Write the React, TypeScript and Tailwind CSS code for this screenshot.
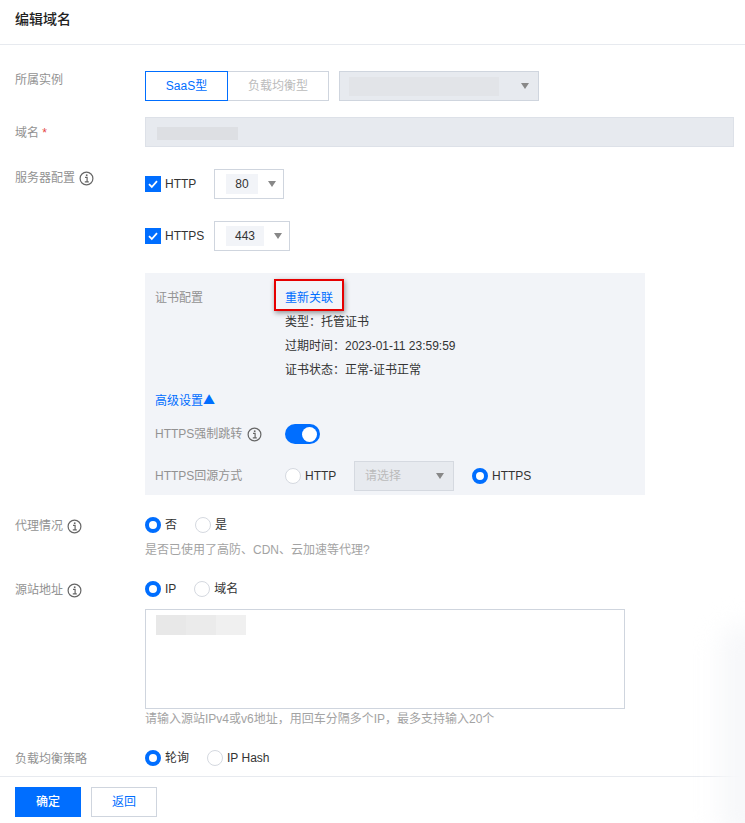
import React from 'react';

const FONT = "font-['Liberation_Sans','Noto_Sans_CJK_SC',sans-serif]";

const Caret = ({ className = '' }: { className?: string }) => (
  <span className={`block h-0 w-0 border-x-[4.5px] border-t-[6px] border-x-transparent border-t-[#888] ${className}`} />
);

const InfoIcon = () => (
  <svg width="15" height="15" viewBox="0 0 15 15" fill="none" className="shrink-0">
    <circle cx="7.5" cy="7.5" r="6.4" stroke="#666" strokeWidth="1.2" />
    <rect x="6.9" y="3.4" width="1.6" height="1.6" fill="#666" />
    <path d="M6 6.3h2.1v4.5M5.8 10.9h4" stroke="#666" strokeWidth="1.2" />
  </svg>
);

const Radio = ({ checked, label }: { checked?: boolean; label: string }) => (
  <span className="flex items-center">
    {checked ? (
      <span className="block h-4 w-4 rounded-full border-[4px] border-[#006eff] bg-white" />
    ) : (
      <span className="block h-4 w-4 rounded-full border border-[#d5d9e0] bg-white" />
    )}
    <span className="ml-[4px] text-xs text-[#333]">{label}</span>
  </span>
);

const Check = ({ label }: { label: string }) => (
  <span className="flex items-center">
    <span className="flex h-4 w-4 items-center justify-center bg-[#006eff]">
      <svg width="12" height="12" viewBox="0 0 12 12" fill="none">
        <path d="M2 6.2l2.8 2.8L10 3.2" stroke="#fff" strokeWidth="1.8" />
      </svg>
    </span>
    <span className="ml-[4px] text-xs text-[#333]">{label}</span>
  </span>
);

const PortSelect = ({ value, width, pill }: { value: string; width: string; pill: string }) => (
  <div className={`flex h-[30px] items-center justify-between border border-[#cfd5de] bg-white pl-[11px] pr-[7px] ${width}`}>
    <span className={`flex h-[20px] items-center justify-center bg-[#f2f4f8] text-xs text-[#333] ${pill}`}>{value}</span>
    <Caret />
  </div>
);

const Row = ({ label, children, className = '' }: { label: React.ReactNode; children: React.ReactNode; className?: string }) => (
  <div className={`flex ${className}`}>
    <div className="w-[130px] shrink-0 text-xs text-[#929292]">{label}</div>
    <div className="min-w-0 flex-1">{children}</div>
  </div>
);

const LabelWithInfo = ({ text }: { text: string }) => (
  <span className="flex items-center gap-[4px] leading-[18px]">
    {text}
    <InfoIcon />
  </span>
);

const App: React.FC = () => {
  return (
    <div className={`relative flex h-[823px] w-[745px] flex-col overflow-hidden bg-white ${FONT}`}>
      {/* faint glow at the right edge */}
      <div className="pointer-events-none absolute bottom-[-20px] right-[-24px] h-[220px] w-[50px] rounded-full bg-[#f7f8fa] blur-md" />

      <div className="flex h-[45px] shrink-0 items-start border-b border-[#e7eaef] pl-[15px] pt-[10px]">
        <h1 className="text-[14px] font-medium leading-[18px] text-[#222]">编辑域名</h1>
      </div>

      <div className="relative flex-1 overflow-hidden pl-[15px] pr-[11px] pt-[26px]">
        <Row label={<span className="block leading-[18px]">所属实例</span>}>
          <div className="flex">
            <div className="flex h-[30px] w-[83px] items-center justify-center border border-[#006eff] text-xs text-[#006eff]">SaaS型</div>
            <div className="flex h-[30px] w-[101px] items-center justify-center border border-l-0 border-[#cfd5de] text-xs text-[#bbb]">负载均衡型</div>
            <div className="ml-[10px] flex h-[30px] w-[200px] items-center justify-between border border-[#cfd5de] bg-[#e7eaef] pl-[9px] pr-[9px]">
              <span className="block h-[19px] w-[150px] bg-[#e2e4e8]" />
              <Caret />
            </div>
          </div>
        </Row>

        <Row label={<span className="block pt-[7px] leading-[18px]">域名 <span className="text-[#e54545]">*</span></span>} className="mt-[16px]">
          <div className="flex h-[30px] items-center border border-[#dde1e8] bg-[#e7eaef] pl-[11px]">
            <span className="mt-[3px] block h-[13px] w-[81px] bg-[#dddfe3]" />
          </div>
        </Row>

        <Row label={<LabelWithInfo text="服务器配置" />} className="mt-[22px]">
          <div className="flex items-center">
            <div className="w-[69px]"><Check label="HTTP" /></div>
            <PortSelect value="80" width="w-[70px]" pill="w-[32px]" />
          </div>
          <div className="mt-[22px] flex items-center">
            <div className="w-[69px]"><Check label="HTTPS" /></div>
            <PortSelect value="443" width="w-[76px]" pill="w-[38px]" />
          </div>
        </Row>

        <div className="ml-[130px] mt-[22px] h-[222px] w-[500px] bg-[#f2f4f8] pl-[10px] pt-[16px] text-xs">
          <div className="flex leading-[18px]">
            <div className="w-[130px] text-[#929292]">证书配置</div>
            <div className="text-[#333]">
              <span className="relative block text-[#006eff]">
                重新关联
                <span className="absolute left-[-11px] top-[-10px] h-[32px] w-[70px] border-2 border-[#e60000] shadow-[1px_2px_5px_rgba(0,0,0,0.4)]" />
              </span>
              <div className="mt-[6px]">类型：托管证书</div>
              <div className="mt-[6px]">过期时间：2023-01-11 23:59:59</div>
              <div className="mt-[6px]">证书状态：正常-证书正常</div>
            </div>
          </div>
          <div className="mt-[12px] h-[18px] leading-[18px] text-[#006eff]">
            高级设置<span className="font-['Noto_Sans_CJK_SC',sans-serif]">▲</span>
          </div>
          <div className="mt-[15px] flex h-[20px] items-center">
            <div className="flex w-[130px] items-center gap-[5px] text-[#929292]">
              HTTPS强制跳转
              <InfoIcon />
            </div>
            <span className="flex h-[20px] w-[35px] items-center justify-end rounded-full bg-[#006eff] pr-[3px]">
              <span className="block h-[15px] w-[15px] rounded-full bg-white" />
            </span>
          </div>
          <div className="mt-[17px] flex h-[30px] items-center">
            <div className="w-[130px] text-[#929292]">HTTPS回源方式</div>
            <div className="w-[69px]"><Radio label="HTTP" /></div>
            <div className="flex h-[30px] w-[100px] items-center justify-between border border-[#d5d9e0] bg-[#e7eaef] pl-[10px] pr-[9px]">
              <span className="text-[#bbb]">请选择</span>
              <Caret />
            </div>
            <div className="ml-[18px]"><Radio checked label="HTTPS" /></div>
          </div>
        </div>

        <Row label={<LabelWithInfo text="代理情况" />} className="mt-[22px]">
          <div className="flex items-center gap-[18px] leading-[18px]">
            <Radio checked label="否" />
            <Radio label="是" />
          </div>
          <p className="mt-[8px] text-xs leading-[18px] text-[#a3a3a3]">是否已使用了高防、CDN、云加速等代理?</p>
        </Row>

        <Row label={<LabelWithInfo text="源站地址" />} className="mt-[22px]">
          <div className="flex items-center gap-[18px] leading-[18px]">
            <Radio checked label="IP" />
            <Radio label="域名" />
          </div>
          <div className="mt-[12px] h-[100px] w-[480px] border border-[#cfd5de] bg-white pl-[10px] pt-[5px]">
            <span className="flex h-[20px] w-[90px]">
              <span className="block h-full w-[30px] bg-[#e8e8e8]" />
              <span className="block h-full w-[30px] bg-[#ebebeb]" />
              <span className="block h-full w-[30px] bg-[#f0f0f0]" />
            </span>
          </div>
          <p className="mt-[1px] text-xs leading-[18px] text-[#a3a3a3]">请输入源站IPv4或v6地址，用回车分隔多个IP，最多支持输入20个</p>
        </Row>

        <Row label={<span className="block pt-[1px] leading-[18px]">负载均衡策略</span>} className="mt-[21px]">
          <div className="flex items-center gap-[18px] pt-[1px] leading-[18px]">
            <Radio checked label="轮询" />
            <Radio label="IP Hash" />
          </div>
        </Row>
      </div>

      <div className="flex h-[47px] shrink-0 items-start gap-[10px] border-t border-[#e7eaef] pl-[15px] pt-[10px]">
        <button className="flex h-[30px] w-[66px] items-center justify-center bg-[#006eff] text-xs font-medium text-white">确定</button>
        <button className="flex h-[30px] w-[66px] items-center justify-center border border-[#cfd5de] bg-white text-xs text-[#006eff]">返回</button>
      </div>
    </div>
  );
};

export default App;
